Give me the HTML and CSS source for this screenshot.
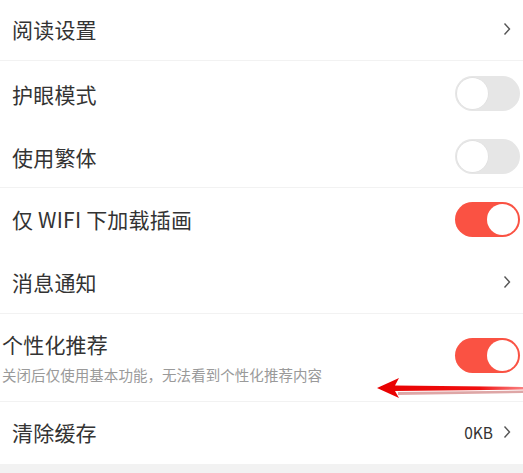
FILE: index.html
```html
<!DOCTYPE html>
<html lang="zh">
<head>
<meta charset="utf-8">
<link rel="stylesheet" href="styles.css">
</head>
<body>
<div class="page">
  <div class="row r1 divided">
    <span class="label">阅读设置</span>
    <svg class="chev" viewBox="0 0 8 14"><path d="M1.5 1.5 L6.5 7 L1.5 12.5" /></svg>
  </div>
  <div class="row r2">
    <span class="label">护眼模式</span>
    <span class="toggle"><span class="knob"></span></span>
  </div>
  <div class="row r3 divided">
    <span class="label">使用繁体</span>
    <span class="toggle"><span class="knob"></span></span>
  </div>
  <div class="row r4">
    <span class="label">仅 WIFI 下加载插画</span>
    <span class="toggle on"><span class="knob"></span></span>
  </div>
  <div class="row r5 divided">
    <span class="label">消息通知</span>
    <svg class="chev" viewBox="0 0 8 14"><path d="M1.5 1.5 L6.5 7 L1.5 12.5" /></svg>
  </div>
  <div class="row r6 divided">
    <div class="col">
      <span class="label">个性化推荐</span>
      <span class="sub">关闭后仅使用基本功能，无法看到个性化推荐内容</span>
    </div>
    <span class="toggle on"><span class="knob"></span></span>
    <svg class="arrow" viewBox="0 0 150 24">
      <defs>
        <linearGradient id="g" x1="0" x2="1" y1="0" y2="0">
          <stop offset="0" stop-color="#e80000"/>
          <stop offset="0.7" stop-color="#f01010"/>
          <stop offset="1" stop-color="#f53030" stop-opacity="0.6"/>
        </linearGradient>
      </defs>
      <path d="M22 16 L148 14.5 L148 17 L22 19 Z" fill="#a00000" opacity="0.35"/>
      <path d="M1 12 L23 2 L19 9.5 L148 11 L148 13.5 L19 15 L23 22 Z" fill="url(#g)"/>
    </svg>
  </div>
  <div class="row r7">
    <span class="label">清除缓存</span>
    <span class="right"><span class="size">0KB</span><svg class="chev" viewBox="0 0 8 14"><path d="M1.5 1.5 L6.5 7 L1.5 12.5" /></svg></span>
  </div>
  <div class="footer"></div>
</div>
</body>
</html>
```

FILE: styles.css
```css
* { box-sizing: border-box; }
html, body { margin: 0; padding: 0; background: #fff; }
body {
  font-family: "Noto Sans CJK SC", "Noto Sans", sans-serif;
  color: #333;
  width: 523px;
  height: 473px;
  overflow: hidden;
}
.page { display: flex; flex-direction: column; }
.row {
  display: flex;
  align-items: center;
  justify-content: space-between;
  padding: 0 3px 0 12px;
  position: relative;
}
.divided { border-bottom: 1px solid #f2f2f2; }
.r1 { height: 61px; padding-bottom: 2px; }
.r2 { height: 65px; }
.r3 { height: 62px; }
.r4 { height: 62px; }
.r5 { height: 64px; }
.r6 { height: 88px; padding-left: 2px; align-items: flex-start; }
.r7 { height: 62px; padding-bottom: 2px; }
.label {
  font-size: 21px;
  line-height: 28px;
  color: #333;
  letter-spacing: 0.2px;
}
.chev {
  width: 8px;
  height: 14px;
  margin-right: 9px;
  fill: none;
  stroke: #555;
  stroke-width: 1.4;
}
.toggle {
  width: 65px;
  height: 35px;
  border-radius: 18px;
  background: #e6e6e6;
  padding: 2px;
  display: flex;
  align-items: center;
}
.toggle .knob {
  width: 31px;
  height: 31px;
  border-radius: 50%;
  background: #fff;
  box-shadow: 0 0 0 0.5px #ddd;
}
.toggle.on {
  background: #fa5243;
  justify-content: flex-end;
}
.toggle.on .knob { box-shadow: none; }
.col {
  display: flex;
  flex-direction: column;
  padding-top: 16px;
}
.sub {
  font-size: 14.5px;
  line-height: 20px;
  color: #9a9a9a;
  margin-top: 7px;
  letter-spacing: 0.05px;
}
.r6 .toggle { margin-top: 24px; }
.arrow {
  position: absolute;
  left: 376px;
  top: 62px;
  width: 150px;
  height: 24px;
}
.right { display: flex; align-items: center; }
.size {
  font-size: 15.5px;
  color: #333;
  margin-right: 10px;
}
.right .chev { margin-right: 9px; }
.footer { height: 12px; background: #f2f2f2; }
```
